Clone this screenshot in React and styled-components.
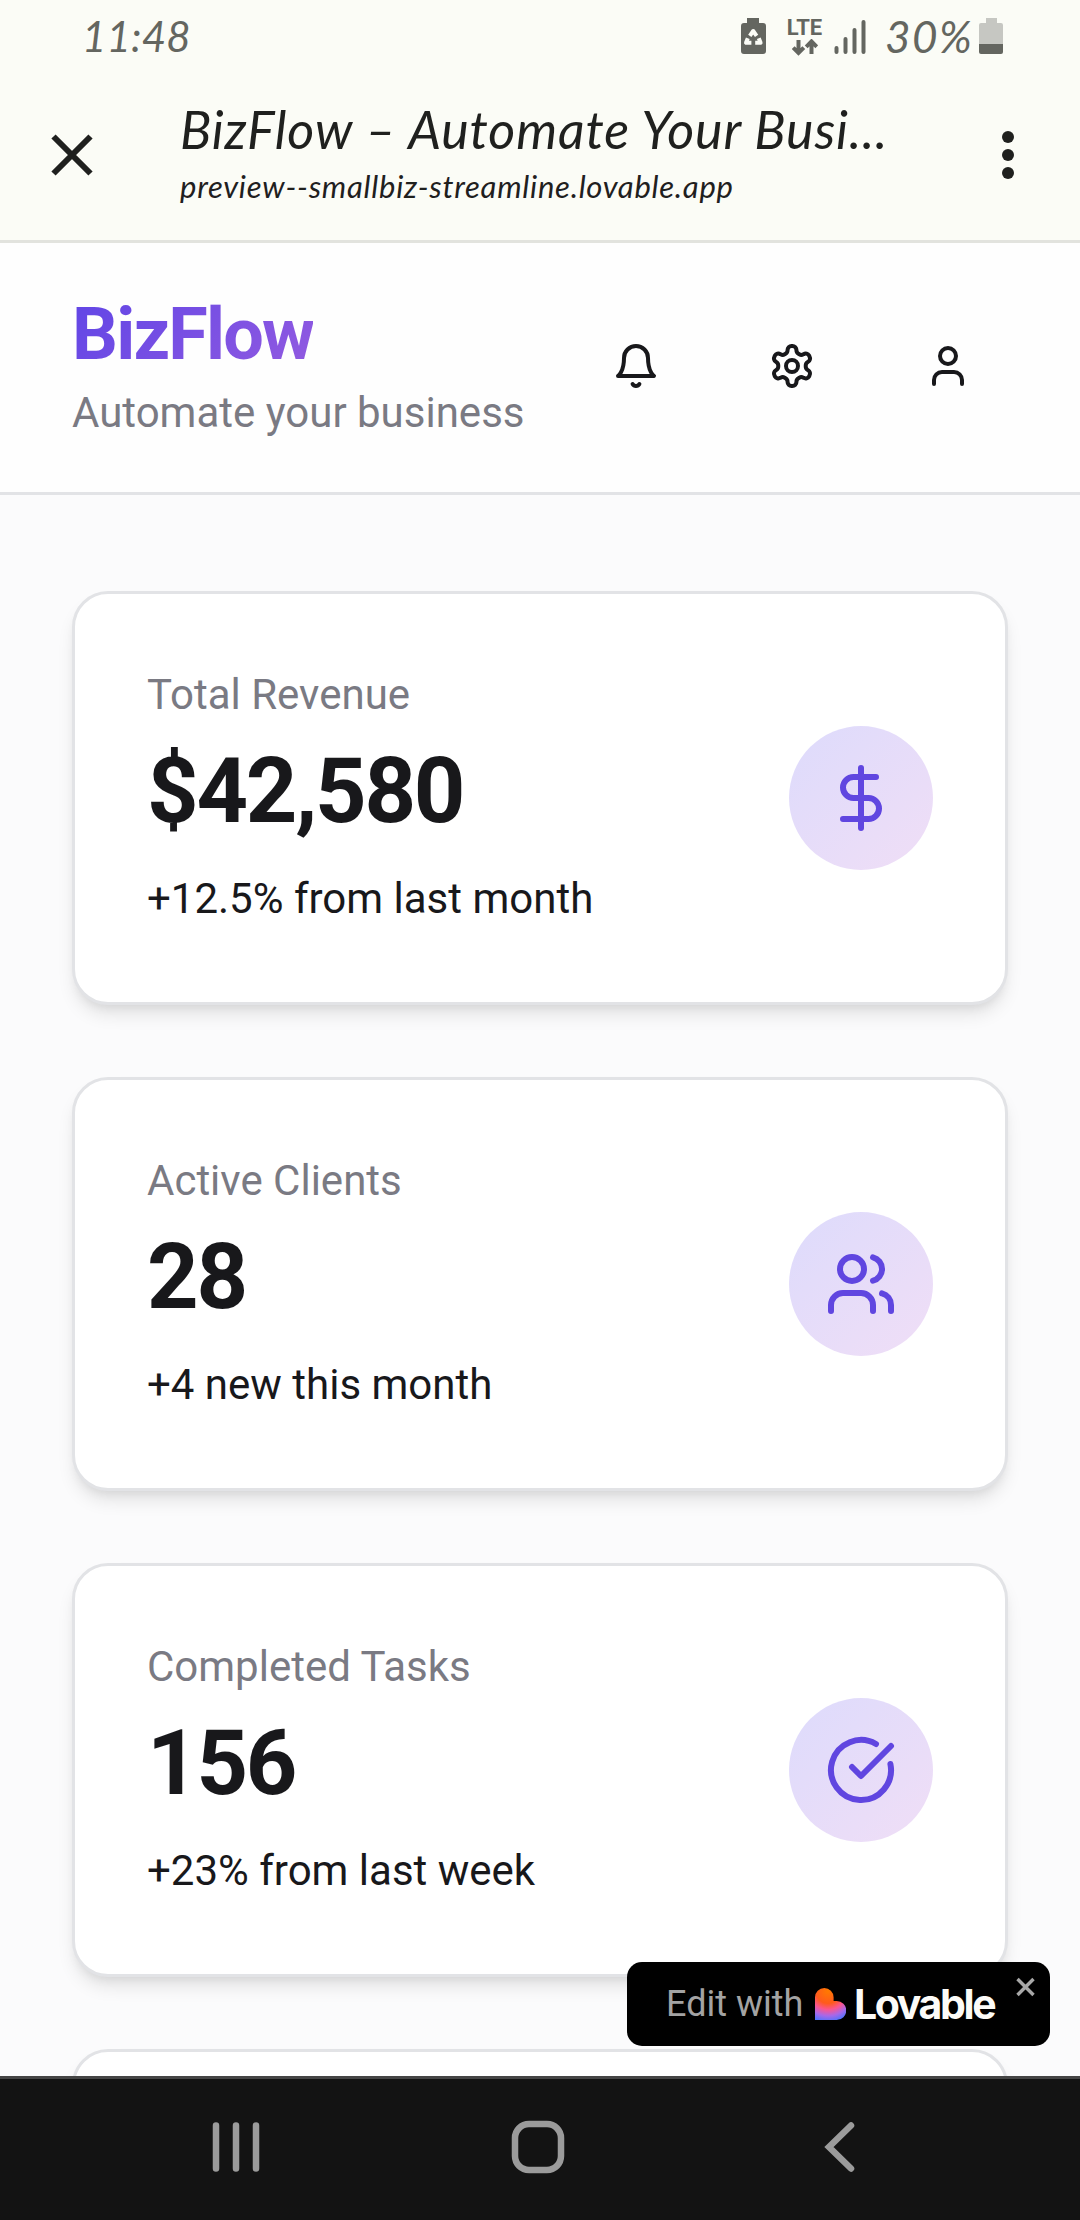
import styled, { createGlobalStyle } from "styled-components";

const theme = {
    colors: {
        chrome: "#fbfcf6",
        chromeLine: "#e2e3de",
        chromeText: "#1f201e",
        status: "#646660",
        statusLight: "#c6c7c2",
        page: "#fbfbfc",
        white: "#ffffff",
        line: "#e2e3e6",
        text: "#18181b",
        muted: "#7a7a83",
        primary: "#6046e0",
        nav: "#131313",
        navLine: "#454545",
        navIcon: "#9b9b9b",
    },
    fonts: {
        app: "Roboto, 'Liberation Sans', sans-serif",
        system: "Lato, 'Liberation Sans', sans-serif",
    },
}

const stats = [
    { label: "Total Revenue", value: "$42,580", change: "+12.5% from last month", Icon: DollarIcon },
    { label: "Active Clients", value: "28", change: "+4 new this month", Icon: UsersIcon },
    { label: "Completed Tasks", value: "156", change: "+23% from last week", Icon: CheckIcon },
]

export default function App() {
    return (
        <>
            <GlobalStyle />
            <Screen>
                <StatusBar />
                <BrowserBar />
                <AppHeader />
                <Main>
                    {stats.map(({ label, value, change, Icon }) => (
                        <Card key={label}>
                            <div>
                                <Label>{label}</Label>
                                <Value>{value}</Value>
                                <Change>{change}</Change>
                            </div>
                            <IconCircle>
                                <Icon />
                            </IconCircle>
                        </Card>
                    ))}
                    <Card />
                </Main>
                <LovableBadge />
                <NavBar />
            </Screen>
        </>
    )
}

function StatusBar() {
    return (
        <StatusBarStyled>
            <Clock>11:48</Clock>
            <StatusIcons>
                <svg className="saver" width="25" height="36" viewBox="0 0 25 36">
                    <path d="M6 0h12v5h4a3 3 0 0 1 3 3v25a3 3 0 0 1-3 3H3a3 3 0 0 1-3-3V8a3 3 0 0 1 3-3h3z" fill={theme.colors.status} />
                    <g fill="none" stroke="#fbfcf6" strokeWidth="4" strokeLinejoin="round">
                        <path d="M8.8 17.8 12.2 13l3.4 4.8" />
                        <path d="M6.8 20.2 5 24.8h5.4" />
                        <path d="M17.8 20.2l1.8 4.6h-5.4" />
                    </g>
                </svg>
                <Lte>
                    <span>LTE</span>
                    <svg width="26" height="17" viewBox="0 0 26 17">
                        <g fill="none" stroke={theme.colors.status} strokeWidth="4">
                            <path d="M6.5 1v13M1.2 8.6l5.3 5.4 5.3-5.4" />
                            <path d="M19.5 15V2M14.2 7.8l5.3-5.4 5.3 5.4" />
                        </g>
                    </svg>
                </Lte>
                <svg className="signal" width="32" height="36" viewBox="0 0 32 36">
                    <g stroke={theme.colors.status} strokeWidth="4" strokeLinecap="round">
                        <path d="M2.5 30v4M11.5 21v13M20.5 12v22M29.5 4v30" />
                    </g>
                </svg>
                <Percent>30%</Percent>
                <svg width="24" height="36" viewBox="0 0 24 36">
                    <path d="M7 0h11v5h4a2 2 0 0 1 2 2v19H0V7a2 2 0 0 1 2-2h5z" fill={theme.colors.statusLight} />
                    <path d="M0 26h24v8a2 2 0 0 1-2 2H2a2 2 0 0 1-2-2z" fill={theme.colors.status} />
                </svg>
            </StatusIcons>
        </StatusBarStyled>
    )
}

function BrowserBar() {
    return (
        <BrowserBarStyled>
            <svg width="42" height="42" viewBox="0 0 42 42">
                <path d="M2.5 2.5l37 37M39.5 2.5l-37 37" stroke={theme.colors.chromeText} strokeWidth="6" />
            </svg>
            <PageInfo>
                <PageTitle>BizFlow – Automate Your Busi...</PageTitle>
                <PageUrl>preview--smallbiz-streamline.lovable.app</PageUrl>
            </PageInfo>
            <svg width="12" height="48" viewBox="0 0 12 48" fill={theme.colors.chromeText}>
                <circle cx="6" cy="6" r="6" />
                <circle cx="6" cy="24" r="6" />
                <circle cx="6" cy="42" r="6" />
            </svg>
        </BrowserBarStyled>
    )
}

function AppHeader() {
    return (
        <AppHeaderStyled>
            <div>
                <Brand>BizFlow</Brand>
                <Tagline>Automate your business</Tagline>
            </div>
            <Actions>
                <IconButton>
                    <Icon $size={48}>
                        <path d="M6 8a6 6 0 0 1 12 0c0 7 3 9 3 9H3s3-2 3-9" />
                        <path d="M10.3 21a1.94 1.94 0 0 0 3.4 0" />
                    </Icon>
                </IconButton>
                <IconButton>
                    <Icon $size={48}>
                        <path d="M12.22 2h-.44a2 2 0 0 0-2 2v.18a2 2 0 0 1-1 1.73l-.43.25a2 2 0 0 1-2 0l-.15-.08a2 2 0 0 0-2.73.73l-.22.38a2 2 0 0 0 .73 2.73l.15.1a2 2 0 0 1 1 1.72v.51a2 2 0 0 1-1 1.74l-.15.09a2 2 0 0 0-.73 2.73l.22.38a2 2 0 0 0 2.73.73l.15-.08a2 2 0 0 1 2 0l.43.25a2 2 0 0 1 1 1.73V20a2 2 0 0 0 2 2h.44a2 2 0 0 0 2-2v-.18a2 2 0 0 1 1-1.73l.43-.25a2 2 0 0 1 2 0l.15.08a2 2 0 0 0 2.73-.73l.22-.39a2 2 0 0 0-.73-2.73l-.15-.08a2 2 0 0 1-1-1.74v-.5a2 2 0 0 1 1-1.74l.15-.09a2 2 0 0 0 .73-2.73l-.22-.38a2 2 0 0 0-2.73-.73l-.15.08a2 2 0 0 1-2 0l-.43-.25a2 2 0 0 1-1-1.73V4a2 2 0 0 0-2-2z" />
                        <circle cx="12" cy="12" r="3" />
                    </Icon>
                </IconButton>
                <IconButton>
                    <Icon $size={48}>
                        <path d="M19 21v-2a4 4 0 0 0-4-4H9a4 4 0 0 0-4 4v2" />
                        <circle cx="12" cy="7" r="4" />
                    </Icon>
                </IconButton>
            </Actions>
        </AppHeaderStyled>
    )
}

function DollarIcon() {
    return (
        <Icon $size={72}>
            <path d="M12 2v20" />
            <path d="M17 5H9.5a3.5 3.5 0 0 0 0 7h5a3.5 3.5 0 0 1 0 7H6" />
        </Icon>
    )
}

function UsersIcon() {
    return (
        <Icon $size={72}>
            <path d="M16 21v-2a4 4 0 0 0-4-4H6a4 4 0 0 0-4 4v2" />
            <circle cx="9" cy="7" r="4" />
            <path d="M22 21v-2a4 4 0 0 0-3-3.87" />
            <path d="M16 3.13a4 4 0 0 1 0 7.75" />
        </Icon>
    )
}

function CheckIcon() {
    return (
        <Icon $size={72}>
            <path d="M21.801 10A10 10 0 1 1 17 3.335" />
            <path d="m9 11 3 3L22 4" />
        </Icon>
    )
}

function LovableBadge() {
    return (
        <Badge>
            <BadgeText>Edit with</BadgeText>
            <svg className="heart" width="31" height="32" viewBox="0 0 31 32">
                <defs>
                    <radialGradient id="heart" gradientUnits="userSpaceOnUse" cx="13" cy="3" r="31">
                        <stop offset="0" stopColor="#ff7a00" />
                        <stop offset="0.4" stopColor="#ff5a1c" />
                        <stop offset="0.6" stopColor="#fb5590" />
                        <stop offset="0.8" stopColor="#a868e8" />
                        <stop offset="1" stopColor="#4b73ff" />
                    </radialGradient>
                </defs>
                <path d="M0 9.3a9.3 9.3 0 0 1 18.6 0v3.6h3.1a9.3 9.3 0 0 1 0 19.1H0z" fill="url(#heart)" />
            </svg>
            <BadgeName>Lovable</BadgeName>
            <svg className="close" width="19" height="20" viewBox="0 0 19 20">
                <path d="M1.5 2l16 16M17.5 2l-16 16" stroke="#a8a8a8" strokeWidth="3.4" />
            </svg>
        </Badge>
    )
}

function NavBar() {
    return (
        <NavBarStyled>
            <svg width="60" height="60" viewBox="0 0 60 60">
                <path d="M10 8.5v43M30 8.5v43M50 8.5v43" />
            </svg>
            <svg width="60" height="60" viewBox="0 0 60 60">
                <rect x="7" y="7" width="46" height="46" rx="14" />
            </svg>
            <svg width="60" height="60" viewBox="0 0 60 60">
                <path d="M41 8.5 19 30l22 21.5" />
            </svg>
        </NavBarStyled>
    )
}

const GlobalStyle = createGlobalStyle`
* {
    box-sizing: border-box;
}
body {
    margin: 0;
}
svg {
    display: block;
    flex-shrink: 0;
}
`;

const Screen = styled.div`
position: relative;
display: flex;
flex-direction: column;
width: 1080px;
height: 2220px;
overflow: hidden;
background: ${theme.colors.page};
color: ${theme.colors.text};
font-family: ${theme.fonts.app};
`;

const StatusBarStyled = styled.div`
display: flex;
justify-content: space-between;
height: 72px;
padding: 0 77px 0 82px;
background: ${theme.colors.chrome};
color: ${theme.colors.status};
font-family: ${theme.fonts.system};
font-style: italic;
`;

const Clock = styled.span`
font-size: 42px;
line-height: 73px;
letter-spacing: 0.2px;
`;

const StatusIcons = styled.div`
display: flex;
align-items: center;
.saver {
    margin-right: 21px;
}
.signal {
    margin: 0 19px 0 12px;
}
`;

const Lte = styled.div`
display: flex;
flex-direction: column;
align-items: center;
width: 35px;
height: 37px;
margin-top: 3px;
justify-content: space-between;
span {
    font: 700 22px/18px Roboto, sans-serif;
}
`;

const Percent = styled.span`
width: 94px;
font-size: 44px;
line-height: 72px;
letter-spacing: 1.5px;
`;

const BrowserBarStyled = styled.div`
display: flex;
align-items: center;
height: 171px;
padding: 0 66px 3px 51px;
border-bottom: 3px solid ${theme.colors.chromeLine};
background: ${theme.colors.chrome};
color: ${theme.colors.chromeText};
font-family: ${theme.fonts.system};
font-style: italic;
`;

const PageInfo = styled.div`
flex: 1;
padding-left: 87px;
white-space: nowrap;
`;

const PageTitle = styled.div`
font-size: 52px;
line-height: 60px;
letter-spacing: 0.9px;
`;

const PageUrl = styled.div`
padding-top: 3px;
font-size: 31px;
line-height: 48px;
letter-spacing: 0.75px;
`;

const AppHeaderStyled = styled.header`
display: flex;
align-items: center;
justify-content: space-between;
height: 252px;
padding: 0 72px 3px;
border-bottom: 3px solid ${theme.colors.line};
background: #fefefe;
`;

const Brand = styled.h1`
width: max-content;
margin: -2px 0 0;
font-size: 72px;
line-height: 96px;
letter-spacing: -1.8px;
background: linear-gradient(135deg, #5f45e6, #945be0);
background-clip: text;
-webkit-background-clip: text;
color: transparent;
`;

const Tagline = styled.p`
margin: 0;
font-size: 42px;
line-height: 60px;
color: ${theme.colors.muted};
`;

const Actions = styled.div`
display: flex;
gap: 36px;
`;

const IconButton = styled.button`
display: flex;
align-items: center;
justify-content: center;
width: 120px;
height: 120px;
padding: 0;
border: none;
background: none;
color: ${theme.colors.text};
`;

const Icon = styled.svg.attrs({ viewBox: "0 0 24 24" })`
width: ${({ $size }) => $size}px;
height: ${({ $size }) => $size}px;
fill: none;
stroke: currentColor;
stroke-width: 2;
stroke-linecap: round;
stroke-linejoin: round;
`;

const Main = styled.main`
display: flex;
flex: 1;
flex-direction: column;
gap: 72px;
min-height: 0;
padding: 96px 72px 0;
overflow: hidden;
`;

const Card = styled.section`
display: flex;
flex-shrink: 0;
align-items: center;
justify-content: space-between;
height: 414px;
padding: 0 72px;
border: 3px solid ${theme.colors.line};
border-radius: 36px;
background: ${theme.colors.white};
box-shadow: 0 12px 18px -3px rgb(0 0 0 / 0.1), 0 6px 12px -6px rgb(0 0 0 / 0.1);
`;

const Label = styled.p`
margin: -2px 0 0;
font-size: 42px;
line-height: 60px;
color: ${theme.colors.muted};
`;

const Value = styled.p`
margin: 13px 0 23px;
font-size: 90px;
font-weight: 700;
line-height: 108px;
letter-spacing: -2.25px;
`;

const Change = styled.p`
margin: 0;
font-size: 42px;
line-height: 60px;
`;

const IconCircle = styled.div`
display: flex;
align-items: center;
justify-content: center;
width: 144px;
height: 144px;
border-radius: 50%;
background: linear-gradient(135deg, #dddbfc, #f0def6);
color: ${theme.colors.primary};
`;

// floats over the last visible cards
const Badge = styled.div`
position: absolute;
top: 1962px;
right: 30px;
display: flex;
align-items: center;
width: 423px;
height: 84px;
padding-left: 39px;
border-radius: 15px;
background: #000;
white-space: nowrap;
.heart {
    margin-right: 8px;
}
.close {
    margin: 0 0 34px 18px;
}
`;

const BadgeText = styled.span`
width: 149px;
font-size: 36px;
line-height: 48px;
color: #a3a3a3;
`;

const BadgeName = styled.span`
width: 144px;
font-family: Inter, sans-serif;
font-size: 41px;
font-weight: 700;
line-height: 48px;
letter-spacing: -2.4px;
color: #fcfbf8;
`;

const NavBarStyled = styled.nav`
display: flex;
align-items: center;
gap: 242px;
height: 144px;
padding: 0 0 6px 206px;
border-top: 3px solid ${theme.colors.navLine};
background: ${theme.colors.nav};
svg {
    fill: none;
    stroke: ${theme.colors.navIcon};
    stroke-width: 6.5;
    stroke-linecap: round;
}
`;
